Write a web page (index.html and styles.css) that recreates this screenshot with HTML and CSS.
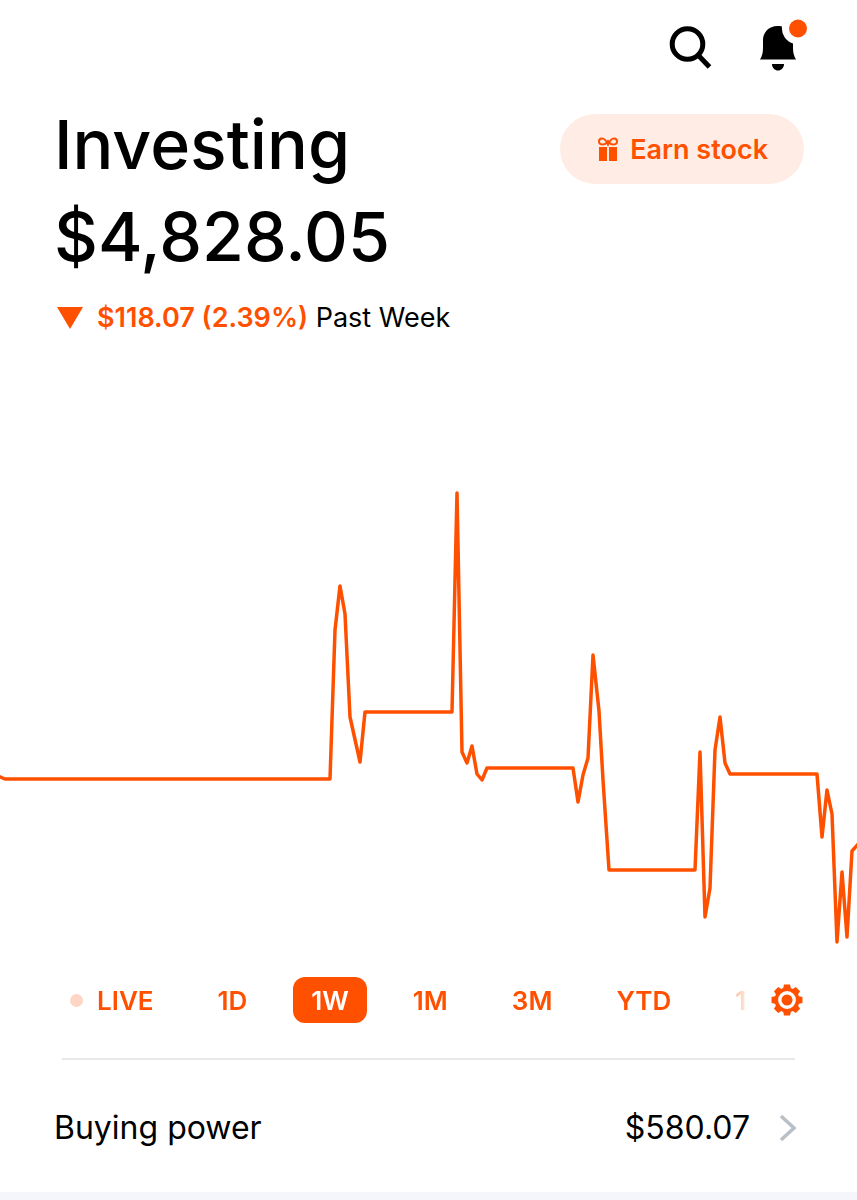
FILE: index.html
```
<!DOCTYPE html>
<html lang="en">
<head>
    <meta charset="UTF-8">
    <meta name="viewport" content="width=device-width, initial-scale=1">
    <title>Investing</title>
    <link rel="stylesheet" href="styles.css">
</head>
<body>
    <header class="topbar">
        <button class="icon-btn" type="button" aria-label="Search">
            <svg width="48" height="48" viewBox="0 0 48 48" fill="none" stroke="#000" stroke-width="5">
                <circle cx="22.500" cy="19" r="15.300"/>
                <path d="M33 30L44.500 42"/>
            </svg>
        </button>
        <button class="icon-btn" type="button" aria-label="Notifications">
            <svg width="52" height="56" viewBox="0 3 52 56">
                <path d="M26 8.500C14 6 7 14 7 22V30C7 35 6 38 4 41.500H40C38 38 37 35 37 30V25.500A16 16 0 0 1 26 8.500Z" fill="#000"/>
                <path d="M16 46H28C28 50 25 52.500 22 52.500S16 50 16 46Z" fill="#000"/>
                <circle cx="42" cy="10.500" r="9" fill="#ff5000"/>
            </svg>
        </button>
    </header>

    <main>
        <section class="summary">
            <div class="summary-text">
                <h1 class="title">Investing</h1>
                <div class="amount">$4,828.05</div>
                <p class="change">
                    <svg class="arrow" width="26" height="22" viewBox="0 0 26 22"><path d="M0 0H26L13 22Z" fill="#ff5000"/></svg>
                    <span><strong>$118.07 (2.39%)</strong> Past Week</span>
                </p>
            </div>
            <button class="earn" type="button">
                <svg width="20" height="24" viewBox="0 0 20 24">
                    <path d="M1 10H9V24H1ZM11 10H19V24H11Z" fill="#ff5000"/>
                    <path d="M10 7.500C8 3 6 1.500 4 1.500C2 1.500 1 3 1 4.500C1 6.500 3 7.500 5 7.500C8 7.500 9 5 10 4C11 5 12 7.500 15 7.500C17 7.500 19 6.500 19 4.500C19 3 18 1.500 16 1.500C14 1.500 12 3 10 7.500Z" fill="none" stroke="#ff5000" stroke-width="2"/>
                </svg>
                Earn stock
            </button>
        </section>

        <svg class="chart" viewBox="0 336 857 620" role="img" aria-label="Portfolio value, past week">
            <polyline points="-2,776 5,779 330,779 335,630 340,586 345,614 350,717 360,762 365,712 452,712 457,493 462,752 467,763 472,746 477,774 482,780 487,768 573,768 578,802 583,775 588,758 593,655 599,711 603,780 609,870 695,870 700,752 705,917 710,888 715,750 720,717 725,763 730,774 817,774 822,837 827,790 832,814 837,942 842,872 847,937 852,851 859,843"/>
        </svg>

        <div class="ranges">
            <div class="range-list">
                <button class="range live" type="button"><span class="live-dot"></span>LIVE</button>
                <button class="range" type="button">1D</button>
                <button class="range active" type="button">1W</button>
                <button class="range" type="button">1M</button>
                <button class="range" type="button">3M</button>
                <button class="range" type="button">YTD</button>
                <button class="range" type="button">1Y</button>
            </div>
            <button class="icon-btn" type="button" aria-label="Chart settings">
                <svg width="32" height="32" viewBox="-16 -16 32 32" fill="#ff5000">
                    <g id="teeth">
                        <path d="M-3 -15.500H3L4 -11H-4ZM-3 15.500H3L4 11H-4ZM-15.500 -3V3L-11 4V-4ZM15.500 -3V3L11 4V-4Z"/>
                    </g>
                    <use href="#teeth" transform="rotate(45)"/>
                    <circle r="10.700" fill="none" stroke="#ff5000" stroke-width="3.600"/>
                    <circle r="5.500"/>
                </svg>
            </button>
        </div>

        <a class="buying-power" href="#">
            <span>Buying power</span>
            <span class="value">$580.07</span>
            <svg width="18" height="28" viewBox="0 0 18 28"><path d="M2 2L15 14L2 26" fill="none" stroke="#b8bfc5" stroke-width="3.500"/></svg>
        </a>
    </main>
    <div class="next-section"></div>
</body>
</html>
```
FILE: styles.css
```
* {
    box-sizing: border-box;
}
body {
    margin: 0;
    background-color: #fff;
    color: #000;
    font-family: Inter, "Liberation Sans", sans-serif;
    font-size: 27px;
}
button {
    font: inherit;
    border: none;
    background: none;
    padding: 0;
    cursor: pointer;
}
svg {
    display: block;
    flex-shrink: 0;
}
.icon-btn svg {
    overflow: visible;
}
.topbar {
    display: flex;
    justify-content: flex-end;
    align-items: center;
    gap: 43px;
    height: 98px;
    padding: 0 49px 0 56px;
}
.summary {
    display: flex;
    justify-content: space-between;
    align-items: flex-start;
    padding: 0 53px 0 54px;
}
.title,
.amount {
    margin: 0;
    font-size: 68px;
    font-weight: 500;
    line-height: 92px;
}
.change {
    display: flex;
    align-items: center;
    gap: 14px;
    margin: 18px 0 0;
    padding-left: 3px;
    line-height: 36px;
}
.change strong {
    color: #ff5000;
    font-weight: 600;
}
.earn {
    display: flex;
    align-items: center;
    gap: 12px;
    height: 70px;
    margin-top: 16px;
    padding: 0 36px 0 38px;
    border-radius: 35px;
    background-color: #ffede5;
    color: #ff5000;
    font-weight: 600;
    white-space: nowrap;
}
.chart {
    width: 100%;
    height: auto;
}
.chart polyline {
    fill: none;
    stroke: #ff5000;
    stroke-width: 3.5;
    stroke-linecap: round;
    stroke-linejoin: round;
}
.ranges {
    display: flex;
    align-items: center;
    gap: 26px;
    margin-top: 21px;
    padding: 0 54px 0 70px;
}
.range-list {
    display: flex;
    flex: 1;
    gap: 28px;
    min-width: 0;
    overflow: hidden;
    mask-image: linear-gradient(to left, rgba(0, 0, 0, 0.15), #000 36px);
}
.range {
    flex-shrink: 0;
    height: 46px;
    padding: 0 18px;
    border-radius: 12px;
    color: #ff5000;
    font-size: 26px;
    font-weight: 600;
}
.range.active {
    background-color: #ff5000;
    color: #fff;
}
.range.live {
    display: flex;
    align-items: center;
    gap: 14px;
    padding-left: 0;
}
.live-dot {
    width: 13px;
    height: 13px;
    border-radius: 50%;
    background-color: #ffd6c5;
}
.buying-power {
    display: flex;
    align-items: center;
    margin: 35px 0 0;
    padding: 50px 60px 44px 54px;
    color: #000;
    font-size: 32px;
    line-height: 40px;
    text-decoration: none;
    background: linear-gradient(#e6e8ea, #e6e8ea) 62px 0 / calc(100% - 124px) 2px no-repeat;
}
.value {
    margin-left: auto;
    margin-right: 29px;
}
.next-section {
    height: 8px;
    background-color: #f5f6fb;
}
```
